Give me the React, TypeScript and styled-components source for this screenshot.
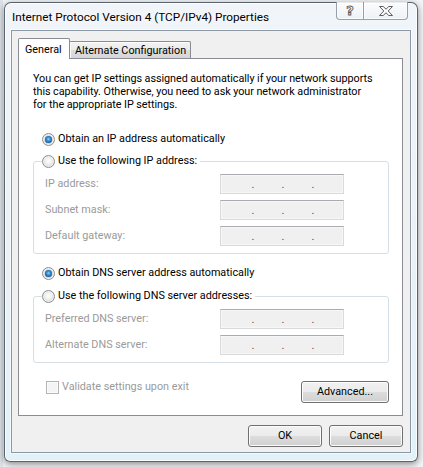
import React from "react";
import styled, { createGlobalStyle } from "styled-components";

const FONT = `"Segoe UI", Roboto, "Noto Sans", sans-serif`;

const Global = createGlobalStyle`
  html, body { margin: 0; padding: 0; }
  body {
    background: #eef1f4;
    font-family: ${FONT};
    font-size: 10.8px;
    color: #000;
  }
  * { box-sizing: border-box; }
`;

const Screen = styled.div`
  width: 423px;
  height: 467px;
  overflow: hidden;
  padding: 2px 0 0 4px;
  background: linear-gradient(to right, #dde3e8 0, #dde3e8 3px, #f3f5f7 3px);
`;

const Window = styled.div`
  width: 414px;
  height: 460px;
  display: flex;
  flex-direction: column;
  border: 1px solid rgba(52, 64, 76, 0.8);
  border-radius: 7px 7px 6px 6px;
  background: linear-gradient(180deg, #f1f5f9 0%, #ebf1f6 55%, #e2f2f8 100%);
  box-shadow: 0 2px 7px rgba(0, 0, 0, 0.45), inset 0 0 0 1px rgba(255, 255, 255, 0.85);
`;

const TitleBar = styled.div`
  height: 27px;
  flex: none;
  display: flex;
  align-items: flex-start;
  padding: 0 9px 0 7px;
`;

const Title = styled.div`
  flex: 1;
  margin-top: 6px;
  font-size: 11.75px;
  line-height: 16px;
  color: #000;
  text-shadow: 0 0 6px #fff, 0 0 10px #fff, 0 0 14px #fff;
  white-space: nowrap;
`;

const CaptionGroup = styled.div`
  display: flex;
  height: 18px;
  margin-top: -1px;
`;

const CaptionButton = styled.div<{ $w: number; $side: "left" | "right" }>`
  width: ${(p) => p.$w}px;
  height: 100%;
  display: grid;
  place-items: center;
  border: 1px solid rgba(86, 100, 114, 0.6);
  border-top: none;
  ${(p) => (p.$side === "right" ? "border-left: none;" : "")}
  border-radius: ${(p) => (p.$side === "left" ? "0 0 0 4px" : "0 0 4px 0")};
  background: linear-gradient(180deg, rgba(255, 255, 255, 0.7), rgba(236, 241, 246, 0.5));
  box-shadow: inset 0 0 0 1px rgba(255, 255, 255, 0.55);
`;

const HelpGlyph = styled.span`
  font-family: "DejaVu Sans", sans-serif;
  font-weight: bold;
  font-size: 13px;
  line-height: 13px;
  color: #fbfbfb;
  -webkit-text-stroke: 0.9px #5d5d5d;
  margin-top: -1px;
`;

const Client = styled.div`
  flex: 1;
  margin: 0 6px 8px;
  border: 1px solid #8c98a4;
  box-shadow: 0 0 0 1px rgba(255, 255, 255, 0.6);
  background: #f0f0f0;
  display: flex;
  flex-direction: column;
  padding: 7px 7px 5px 6px;
`;

const TabStrip = styled.div`
  height: 20px;
  display: flex;
  align-items: flex-end;
  flex: none;
`;

const Tab = styled.div<{ $active?: boolean; $w: number }>`
  position: relative;
  z-index: ${(p) => (p.$active ? 1 : 0)};
  width: ${(p) => p.$w}px;
  height: ${(p) => (p.$active ? 21 : 17)}px;
  margin-bottom: ${(p) => (p.$active ? -1 : 0)}px;
  margin-left: ${(p) => (p.$active ? 0 : -1)}px;
  padding-left: ${(p) => (p.$active ? 6 : 5)}px;
  display: flex;
  align-items: center;
  border: 1px solid #898c95;
  border-bottom: none;
  border-radius: 2px 2px 0 0;
  background: ${(p) =>
    p.$active
      ? "#ffffff"
      : "linear-gradient(180deg, #f3f3f3 0%, #ebebeb 50%, #dedede 51%, #d6d6d6 100%)"};
  box-shadow: ${(p) => (p.$active ? "none" : "inset 0 1px 0 #fdfdfd, inset 1px 0 0 #fafafa")};
  white-space: nowrap;
`;

const Panel = styled.div`
  flex: 1;
  border: 1px solid #898c95;
  background: #ffffff;
  display: flex;
  flex-direction: column;
  padding: 13px 13px 12px 14px;
`;

const Description = styled.p`
  margin: 0;
  line-height: 13px;
  letter-spacing: -0.05px;
  white-space: nowrap;
`;

const OptionRow = styled.div<{ $top: number }>`
  display: flex;
  align-items: center;
  gap: 3px;
  height: 16px;
  margin: ${(p) => p.$top}px 0 0 9px;
  line-height: 16px;
  white-space: nowrap;
`;

const Radio = styled.span<{ $checked?: boolean }>`
  flex: none;
  width: 13px;
  height: 13px;
  border-radius: 50%;
  border: 1px solid #8e8f8f;
  background: radial-gradient(circle at 50% 45%, #ffffff 0%, #f2f2f2 35%, #d4d4d4 80%, #e4e4e4 100%);
  box-shadow: inset 0 0 0 1px rgba(255, 255, 255, 0.55);
  display: grid;
  place-items: center;
  &::after {
    content: "";
    display: ${(p) => (p.$checked ? "block" : "none")};
    width: 7px;
    height: 7px;
    border-radius: 50%;
    background: radial-gradient(circle at 50% 45%, #8fd3fb 0%, #3a8fd6 35%, #135a9e 70%, #0c3c6c 100%);
    box-shadow: 0 0 1px rgba(16, 70, 120, 0.8);
  }
`;

const Group = styled.fieldset<{ $top: number }>`
  margin: ${(p) => p.$top}px 0 0;
  padding: 0;
  min-width: 0;
  border: 1px solid #d5dfe5;
  border-radius: 3px;
  box-shadow: inset 0 0 0 1px #ffffff;
`;

const Legend = styled.legend`
  margin-left: 8px;
  padding: 0 3px 0 0;
  height: 16px;
  display: flex;
  align-items: center;
  gap: 3px;
  line-height: 16px;
  white-space: nowrap;
`;

const Rows = styled.div`
  display: grid;
  grid-template-columns: 175px 124px;
  row-gap: 6px;
  align-items: center;
  padding: 5px 0 7px 11px;
`;

const FieldLabel = styled.span`
  color: #9a9a9a;
  line-height: 20px;
  white-space: nowrap;
`;

const IpBox = styled.div`
  width: 124px;
  height: 20px;
  display: flex;
  align-items: flex-start;
  padding-left: 3px;
  border: 1px solid #d9dadc;
  border-top-color: #a9abb0;
  background: #f0f0f0;
  box-shadow: inset 0 0 0 1px #f7f7f7;
`;

const IpSegment = styled.span`
  width: 28px;
  flex: none;
`;

const IpDot = styled.span`
  width: 2px;
  flex: none;
  display: flex;
  justify-content: center;
  line-height: 19px;
  color: #4a4a4a;
`;

const BottomRow = styled.div`
  display: flex;
  justify-content: space-between;
  align-items: flex-start;
  margin-top: 16px;
`;

const CheckRow = styled.label`
  display: flex;
  align-items: center;
  gap: 3px;
  height: 16px;
  margin-left: 13px;
  color: #9a9a9a;
  line-height: 16px;
  white-space: nowrap;
`;

const CheckBox = styled.span`
  flex: none;
  width: 13px;
  height: 13px;
  border: 1px solid #b4b4b4;
  background: #f4f4f4;
  box-shadow: inset 0 0 0 1px #fbfbfb;
`;

const PushButton = styled.button<{ $w: number; $top?: number }>`
  width: ${(p) => p.$w}px;
  height: 22px;
  margin-top: ${(p) => p.$top ?? 0}px;
  padding: 0;
  font: inherit;
  color: #000;
  border: 1px solid #707070;
  border-radius: 3px;
  background: linear-gradient(180deg, #f2f2f2 0%, #ebebeb 48%, #dddddd 52%, #cfcfcf 100%);
  box-shadow: inset 0 0 0 1px #fcfcfc;
  line-height: 20px;
`;

const DialogButtons = styled.div`
  display: flex;
  justify-content: flex-end;
  gap: 7px;
  margin-top: 9px;
  flex: none;
`;

function IpField() {
  return (
    <IpBox>
      <IpSegment />
      <IpDot>.</IpDot>
      <IpSegment />
      <IpDot>.</IpDot>
      <IpSegment />
      <IpDot>.</IpDot>
    </IpBox>
  );
}

function CloseGlyph() {
  return (
    <svg width="16" height="12" viewBox="0 0 16 12">
      <path
        d="M1.5 1.5 H5.2 L8 4.2 L10.8 1.5 H14.5 L10.2 6 L14.5 10.5 H10.8 L8 7.8 L5.2 10.5 H1.5 L5.8 6 Z"
        fill="#fbfbfb"
        stroke="#5f5f5f"
        strokeWidth="1"
        strokeLinejoin="round"
      />
    </svg>
  );
}

export default function App() {
  return (
    <>
      <Global />
      <Screen>
        <Window>
          <TitleBar>
            <Title>Internet Protocol Version 4 (TCP/IPv4) Properties</Title>
            <CaptionGroup>
              <CaptionButton $w={28} $side="left">
                <HelpGlyph>?</HelpGlyph>
              </CaptionButton>
              <CaptionButton $w={44} $side="right">
                <CloseGlyph />
              </CaptionButton>
            </CaptionGroup>
          </TitleBar>
          <Client>
            <TabStrip>
              <Tab $active $w={52}>General</Tab>
              <Tab $w={122}>Alternate Configuration</Tab>
            </TabStrip>
            <Panel>
              <Description>
                You can get IP settings assigned automatically if your network supports
                <br />
                this capability. Otherwise, you need to ask your network administrator
                <br />
                for the appropriate IP settings.
              </Description>

              <OptionRow $top={20}>
                <Radio $checked />
                <span>Obtain an IP address automatically</span>
              </OptionRow>

              <Group $top={6}>
                <Legend>
                  <Radio />
                  <span>Use the following IP address:</span>
                </Legend>
                <Rows>
                  <FieldLabel>IP address:</FieldLabel>
                  <IpField />
                  <FieldLabel>Subnet mask:</FieldLabel>
                  <IpField />
                  <FieldLabel>Default gateway:</FieldLabel>
                  <IpField />
                </Rows>
              </Group>

              <OptionRow $top={11}>
                <Radio $checked />
                <span>Obtain DNS server address automatically</span>
              </OptionRow>

              <Group $top={7}>
                <Legend>
                  <Radio />
                  <span>Use the following DNS server addresses:</span>
                </Legend>
                <Rows>
                  <FieldLabel>Preferred DNS server:</FieldLabel>
                  <IpField />
                  <FieldLabel>Alternate DNS server:</FieldLabel>
                  <IpField />
                </Rows>
              </Group>

              <BottomRow>
                <CheckRow>
                  <CheckBox />
                  <span>Validate settings upon exit</span>
                </CheckRow>
                <PushButton $w={88} $top={2}>Advanced...</PushButton>
              </BottomRow>
            </Panel>
            <DialogButtons>
              <PushButton $w={74}>OK</PushButton>
              <PushButton $w={74}>Cancel</PushButton>
            </DialogButtons>
          </Client>
        </Window>
      </Screen>
    </>
  );
}
